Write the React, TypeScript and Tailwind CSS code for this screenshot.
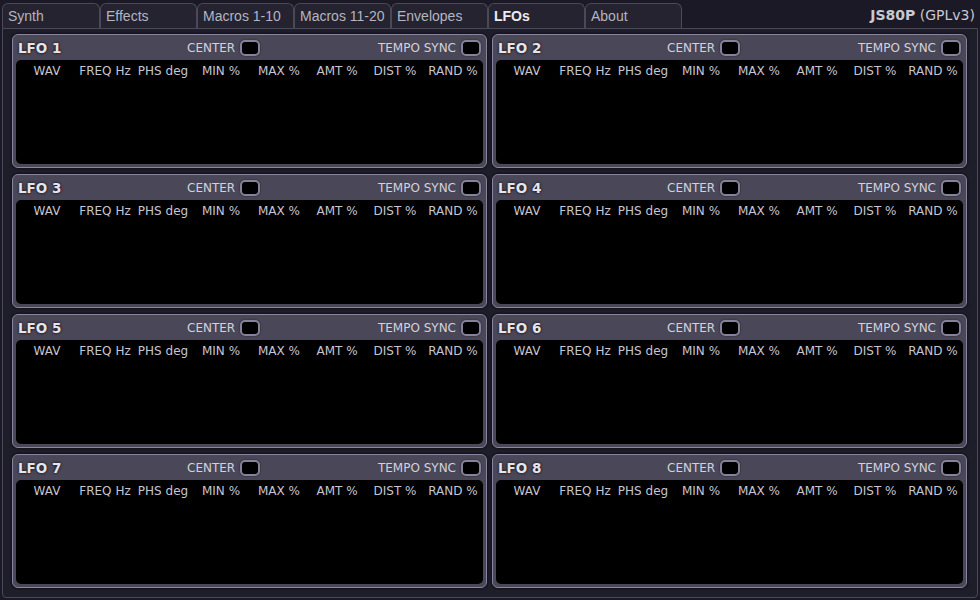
import React from "react";

const tabs = ["Synth", "Effects", "Macros 1-10", "Macros 11-20", "Envelopes", "LFOs", "About"];
const cols = ["WAV", "FREQ Hz", "PHS deg", "MIN %", "MAX %", "AMT %", "DIST %", "RAND %"];

function Toggle() {
  return (
    <div className="w-[20px] h-[16px] rounded-[5px] bg-black border-2 border-[#85829a] shadow-[0_0_2px_rgba(0,0,0,0.6)]" />
  );
}

function LfoPanel({ n }: { n: number }) {
  return (
    <div className="h-[134px] rounded-[6px] border border-[#88859e] bg-[#4a4759] flex flex-col px-[3px] pb-[3px] shadow-[0_0_3px_rgba(0,0,0,0.8)]">
      <div className="h-[25px] pt-[1px] flex items-center text-[12px] text-[#d2d2dc]">
        <div className="w-[171px] pl-[2px] text-[13.5px] font-bold text-[#e4e4ee] [text-shadow:0_0_3px_#000]">LFO {n}</div>
        <div className="flex items-center gap-[5px]">
          <span>CENTER</span>
          <Toggle />
        </div>
        <div className="flex-1" />
        <div className="flex items-center gap-[5px] mr-[2px]">
          <span>TEMPO SYNC</span>
          <Toggle />
        </div>
      </div>
      <div className="flex-1 rounded-[5px] bg-black pl-[2px] pt-[4px]">
        <div className="grid grid-cols-[repeat(8,58px)] text-[12px] leading-[14px] text-[#c6c6d2]">
          {cols.map((c) => (
            <div key={c} className="text-center whitespace-nowrap">{c}</div>
          ))}
        </div>
      </div>
    </div>
  );
}

export default function App() {
  return (
    <div className="w-[980px] h-[600px] bg-[#1a1925] flex flex-col overflow-hidden [font-family:'DejaVu_Sans',sans-serif]">
      <div className="h-[28px] flex items-end pl-[2px] relative">
        {tabs.map((t, i) => (
          <div
            key={t}
            className={
              "h-[25px] rounded-t-[6px] border border-b-0 border-[#4b4959] bg-[#24232f] px-[5px] text-[14px] leading-[25px] [font-family:'Liberation_Sans',Arial,sans-serif] " +
              (i === 0 ? "w-[98px] " : "w-[97px] ") +
              (t === "LFOs" ? "font-bold text-[#ececf4]" : "text-[#b4b4c2]")
            }
          >
            {t}
          </div>
        ))}
        <div className="ml-auto self-start pt-[5px] pr-[5px] text-[14px] text-[#c8c8d4]">
          <span className="font-bold">JS80P</span> (GPLv3)
        </div>
      </div>
      <div className="mx-[2px] mb-[2px] flex-1 border border-[#4b4959] rounded-b-[4px] bg-[#1e1d2a] grid grid-cols-[475px_475px] grid-rows-[repeat(4,134px)] gap-x-[5px] gap-y-[6px] pl-[9px] pt-[5px]">
        {[1, 2, 3, 4, 5, 6, 7, 8].map((n) => (
          <LfoPanel key={n} n={n} />
        ))}
      </div>
    </div>
  );
}
